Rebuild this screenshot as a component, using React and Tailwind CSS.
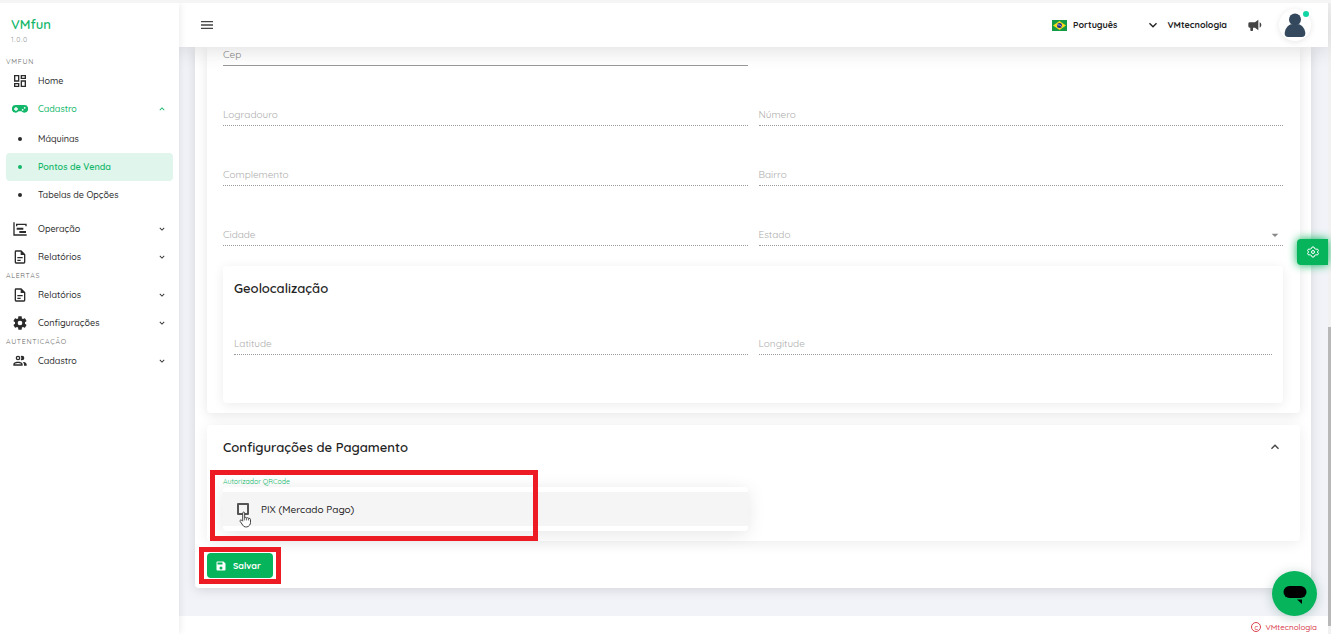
import React, { useState } from "react";

const icons = {
  dashboard: "M19,5V7H15V5H19M9,5V11H5V5H9M19,13V19H15V13H19M9,17V19H5V17H9M21,3H13V9H21V3M11,3H3V13H11V3M21,11H13V21H21V11M11,15H3V21H11V15Z",
  controller: "M5.5,6H18.5A5.5,5.5 0 0,1 18.5,17.5C16.6,17.5 15.2,16.7 14.2,15.5H9.8C8.8,16.7 7.4,17.5 5.5,17.5A5.5,5.5 0 0,1 5.5,6M5,9V11H3V13H5V15H7V13H9V11H7V9H5M19,9A1.3,1.3 0 1,0 19,11.6A1.3,1.3 0 1,0 19,9M16,12A1.3,1.3 0 1,0 16,14.6A1.3,1.3 0 1,0 16,12Z",
  timeline: "M2,2H4V20H22V22H2V2M7,10H17V13H7V10M11,15H21V18H11V15M6,4H22V8H20V6H8V8H6V4Z",
  file: "M6,2A2,2 0 0,0 4,4V20A2,2 0 0,0 6,22H18A2,2 0 0,0 20,20V8L14,2H6M6,4H13V9H18V20H6V4M8,12V14H16V12H8M8,16V18H13V16H8Z",
  cog: "M12,15.5A3.5,3.5 0 0,1 8.5,12A3.5,3.5 0 0,1 12,8.5A3.5,3.5 0 0,1 15.5,12A3.5,3.5 0 0,1 12,15.5M19.43,12.97C19.47,12.65 19.5,12.33 19.5,12C19.5,11.67 19.47,11.34 19.43,11L21.54,9.37C21.73,9.22 21.78,8.95 21.66,8.73L19.66,5.27C19.54,5.05 19.27,4.96 19.05,5.05L16.56,6.05C16.04,5.66 15.5,5.32 14.87,5.07L14.5,2.42C14.46,2.18 14.25,2 14,2H10C9.75,2 9.54,2.18 9.5,2.42L9.13,5.07C8.5,5.32 7.96,5.66 7.44,6.05L4.95,5.05C4.73,4.96 4.46,5.05 4.34,5.27L2.34,8.73C2.21,8.95 2.27,9.22 2.46,9.37L4.57,11C4.53,11.34 4.5,11.67 4.5,12C4.5,12.33 4.53,12.65 4.57,12.97L2.46,14.63C2.27,14.78 2.21,15.05 2.34,15.27L4.34,18.73C4.46,18.95 4.73,19.03 4.95,18.95L7.44,17.94C7.96,18.34 8.5,18.68 9.13,18.93L9.5,21.58C9.54,21.82 9.75,22 10,22H14C14.25,22 14.46,21.82 14.5,21.58L14.87,18.93C15.5,18.67 16.04,18.34 16.56,17.94L19.05,18.95C19.27,19.03 19.54,18.95 19.66,18.73L21.66,15.27C21.78,15.05 21.73,14.78 21.54,14.63L19.43,12.97Z",
  users: "M13.07 10.41A5 5 0 0 0 13.07 4.59A3.39 3.39 0 0 1 15 4A3.5 3.5 0 0 1 15 11A3.39 3.39 0 0 1 13.07 10.41M5.5 7.5A3.5 3.5 0 1 1 9 11A3.5 3.5 0 0 1 5.5 7.5M7.5 7.5A1.5 1.5 0 1 0 9 6A1.5 1.5 0 0 0 7.5 7.5M16 17V19H2V17S2 13 9 13 16 17 16 17M14 17C13.86 16.22 12.67 15 9 15S4.07 16.31 4 17M15.95 13A5.32 5.32 0 0 1 18 17V19H22V17S22 13.37 15.94 13Z",
  down: "M7.41,8.58L12,13.17L16.59,8.58L18,10L12,16L6,10L7.41,8.58Z",
  up: "M7.41,15.41L12,10.83L16.59,15.41L18,14L12,8L6,14L7.41,15.41Z",
  menu: "M3,6H21V8H3V6M3,11H21V13H3V11M3,16H21V18H3V16Z",
  bullhorn: "M12,8H4A2,2 0 0,0 2,10V14A2,2 0 0,0 4,16H5V20A1,1 0 0,0 6,21H8A1,1 0 0,0 9,20V16H12L17,20V4L12,8M21.5,12C21.5,13.71 20.54,15.26 19,16V8C20.53,8.75 21.5,10.3 21.5,12Z",
  save: "M15,9H5V5H15M12,19A3,3 0 0,1 9,16A3,3 0 0,1 12,13A3,3 0 0,1 15,16A3,3 0 0,1 12,19M17,3H5C3.89,3 3,3.9 3,5V19A2,2 0 0,0 5,21H19A2,2 0 0,0 21,19V7L17,3Z",
  caret: "M7,10L12,15L17,10H7Z",
};

function Icon({ name, className }) {
  return (
    <svg viewBox="0 0 24 24" fill="currentColor" fillRule="evenodd" aria-hidden="true" className={`shrink-0 ${className}`}>
      <path d={icons[name]} />
    </svg>
  );
}

function NavItem({ icon, label, open, arrow = true }) {
  return (
    <a href="#" className={`flex h-7 items-center pl-3 pr-3 font-medium ${open ? "text-[#12b76a]" : "text-[#2b2b2b]"}`}>
      <Icon name={icon} className="mr-2.5 size-4" />
      <span className="flex-1">{label}</span>
      {arrow && <Icon name={open ? "up" : "down"} className="size-2.5" />}
    </a>
  );
}

function SubItem({ label, active }) {
  return (
    <a href="#" className={`mx-1.5 flex h-7 items-center rounded pl-3 ${active ? "bg-[#e0f5eb] font-semibold text-[#12b76a]" : "font-medium text-[#2b2b2b]"}`}>
      <span className="mr-4 size-1 rounded-full bg-current" />
      {label}
    </a>
  );
}

function NavHeading({ children }) {
  return <h2 className="pl-1.5 text-[7px] leading-[10px] tracking-widest text-[#666] uppercase">{children}</h2>;
}

function Field({ id, label, disabled = true }) {
  return (
    <div className="grid">
      <input
        id={id}
        disabled={disabled}
        className={`col-start-1 row-start-1 h-[19px] w-full border-b bg-transparent outline-none ${disabled ? "border-dotted border-[#9a9a9a]" : "border-solid border-[#999]"}`}
      />
      <label htmlFor={id} className={`col-start-1 row-start-1 leading-4 ${disabled ? "text-[#adadad]" : "text-[#888]"}`}>{label}</label>
    </div>
  );
}

function StateSelect() {
  return (
    <div className="grid">
      <select id="estado" disabled className="col-start-1 row-start-1 h-[19px] w-full appearance-none border-b border-dotted border-[#9a9a9a] bg-transparent" />
      <label htmlFor="estado" className="col-start-1 row-start-1 flex items-start justify-between leading-4 text-[#adadad]">
        Estado
        <Icon name="caret" className="size-4 text-[#888]" />
      </label>
    </div>
  );
}

function Sidebar() {
  return (
    <aside className="z-20 w-[179px] shrink-0 bg-white text-[9px] shadow-[0_0_8px_rgba(0,0,0,0.1)]">
      <div className="px-[11px] pt-3 pb-2.5">
        <div className="text-[13px] leading-[18px] font-semibold text-[#12b76a]">VMfun</div>
        <div className="text-[7px] leading-[14px] tracking-widest text-[#999]">1.0.0</div>
      </div>
      <nav>
        <NavHeading>VMfun</NavHeading>
        <NavItem icon="dashboard" label="Home" arrow={false} />
        <NavItem icon="controller" label="Cadastro" open />
        <div className="pt-0.5 pb-1.5">
          <SubItem label="Máquinas" />
          <SubItem label="Pontos de Venda" active />
          <SubItem label="Tabelas de Opções" />
        </div>
        <NavItem icon="timeline" label="Operação" />
        <NavItem icon="file" label="Relatórios" />
        <NavHeading>Alertas</NavHeading>
        <NavItem icon="file" label="Relatórios" />
        <NavItem icon="cog" label="Configurações" />
        <NavHeading>Autenticação</NavHeading>
        <NavItem icon="users" label="Cadastro" />
      </nav>
    </aside>
  );
}

function Flag() {
  return (
    <svg viewBox="0 0 30 22" className="h-[11px] w-[15px]" aria-hidden="true">
      <rect width="30" height="22" fill="#169b45" />
      <path d="M15 2L28 11L15 20L2 11Z" fill="#f8dc1c" />
      <circle cx="15" cy="11" r="5" fill="#27348b" />
      <path d="M10.5 9.5Q16 9 19.5 13" fill="none" stroke="#fff" strokeWidth="1.2" />
    </svg>
  );
}

function Header() {
  return (
    <header className="z-10 flex h-11 shrink-0 items-center bg-white pr-[17px] pl-5 text-[9px] font-bold text-[#222] shadow-[0_4px_20px_rgba(0,0,0,0.12)]">
      <button type="button" aria-label="Menu"><Icon name="menu" className="size-4 text-[#444]" /></button>
      <button type="button" className="ml-auto flex items-center gap-1.5"><Flag />Português</button>
      <button type="button" className="ml-7 flex items-center gap-1.5"><Icon name="down" className="size-4" />VMtecnologia</button>
      <button type="button" aria-label="Avisos" className="ml-5"><Icon name="bullhorn" className="size-4 text-[#444]" /></button>
      <button type="button" aria-label="Conta" className="relative ml-4 flex size-8 items-end justify-center rounded-full bg-white shadow-[0_1px_6px_rgba(0,0,0,0.1)]">
        <svg viewBox="0 0 24 28" fill="#34495e" className="mb-1 h-6 w-[22px]">
          <circle cx="12" cy="7.5" r="7" />
          <path d="M7 13H17C21 15 24 19 24 24Q24 28 20 28H4Q0 28 0 24C0 19 3 15 7 13Z" />
        </svg>
        <span className="absolute top-0.5 right-0.5 size-1.5 rounded-full bg-[#11d5a4]" />
      </button>
    </header>
  );
}

function HandCursor() {
  return (
    <svg viewBox="0 0 14 18" className="h-[17px] w-[13px]" aria-hidden="true">
      <path d="M4 10.5V2.2Q4 1 5 1T6.1 2.2V7.2Q7.2 6.2 8.2 7.3Q9.3 6.5 10.3 7.7Q12.2 7.3 12.4 9V12Q12.4 14 11.5 15Q10 17.2 8 17H7Q5 17 4 15L1.2 11Q.8 9.8 1.8 9.5T4 11" fill="#fff" stroke="#333" strokeWidth="1" />
      <path d="M6.1 7V10M8.2 7.5V10M10.3 8V10" stroke="#333" strokeWidth=".8" />
    </svg>
  );
}

function PaymentPanel() {
  const [open, setOpen] = useState(true);
  const [pix, setPix] = useState(false);

  return (
    <section className="mt-3 rounded bg-white pt-3 pr-[17px] pb-2.5 pl-4 shadow-[0_2px_14px_rgba(0,0,0,0.08)]">
      <button type="button" onClick={() => setOpen(!open)} className="flex w-full items-center justify-between text-[13px] leading-5 font-semibold text-[#222]">
        Configurações de Pagamento
        <Icon name={open ? "up" : "down"} className="size-4 text-[#444]" />
      </button>
      {open && (
        <div className="relative mt-5 grid grid-cols-2 gap-x-[11px]">
          <div>
            <div className="text-[7px] leading-[10px] text-[#12b76a]">Autorizador QRCode</div>
            <div className="rounded bg-white py-[5px] shadow-[0_3px_18px_rgba(0,0,0,0.1)]">
              <label className="relative flex h-[34px] items-center gap-3 bg-[#f5f5f5] pl-3.5 text-[10px] font-medium text-[#222]">
                <input type="checkbox" checked={pix} onChange={(e) => setPix(e.target.checked)} className="size-3 appearance-none rounded-[1px] border-2 border-[#555] checked:bg-[#12b76a]" />
                PIX (Mercado Pago)
                <span className="absolute top-[19px] left-4"><HandCursor /></span>
              </label>
            </div>
          </div>
          <div className="pointer-events-none absolute -top-[7px] -left-[13px] h-[71px] w-[328px] border-[5px] border-[#ed1c24]" />
        </div>
      )}
    </section>
  );
}

export default function App() {
  return (
    <div className="relative flex h-screen overflow-hidden border-t-[3px] border-[#f5f5f5] bg-white font-['Quicksand','Lato',sans-serif] text-[10px] text-[#333]">
      <Sidebar />
      <div className="flex min-w-0 flex-1 flex-col bg-[#f1f3f8]">
        <Header />
        <main className="flex-1 pr-[17px] pl-4">
          <form onSubmit={(e) => e.preventDefault()} className="rounded-b bg-white pr-[11px] pb-2.5 pl-3 shadow-[0_2px_12px_rgba(0,0,0,0.12)]">
            <section className="rounded-b bg-white pr-[17px] pb-2.5 pl-4 shadow-[0_2px_12px_rgba(0,0,0,0.1)]">
              <div className="grid grid-cols-2 gap-x-[11px] gap-y-[41px]">
                <Field id="cep" label="Cep" disabled={false} />
                <span />
                <Field id="logradouro" label="Logradouro" />
                <Field id="numero" label="Número" />
                <Field id="complemento" label="Complemento" />
                <Field id="bairro" label="Bairro" />
                <Field id="cidade" label="Cidade" />
                <StateSelect />
              </div>
              <div className="mt-5 rounded bg-white px-[11px] pt-3 pb-12 shadow-[0_2px_12px_rgba(0,0,0,0.08)]">
                <h3 className="text-[13px] leading-5 font-semibold text-[#222]">Geolocalização</h3>
                <div className="mt-[38px] grid grid-cols-2 gap-x-[11px]">
                  <Field id="latitude" label="Latitude" />
                  <Field id="longitude" label="Longitude" />
                </div>
              </div>
            </section>
            <PaymentPanel />
            <div className="relative mt-3 w-fit">
              <button type="submit" className="flex h-[25px] items-center gap-1.5 rounded bg-[#05b45b] pr-3 pl-2 text-[9px] font-bold text-white">
                <Icon name="save" className="size-3" />
                Salvar
              </button>
              <div className="pointer-events-none absolute -inset-x-2 -inset-y-1.5 border-[5px] border-[#ed1c24]" />
            </div>
          </form>
        </main>
        <footer className="flex h-[18px] items-center justify-end gap-1 bg-white pr-[11px] pt-1 text-[8px] font-medium text-[#d9404c]">
          <span className="flex size-2.5 items-center justify-center rounded-full border border-current text-[7px] leading-none">c</span>
          <a href="#">VMtecnologia</a>
        </footer>
      </div>
      <div className="flex w-[3px] shrink-0 flex-col justify-end bg-[#f1f1f1] pb-2">
        <div className="h-[48%] bg-[#b8b8b8]" />
      </div>

      <button type="button" aria-label="Preferências" className="absolute top-[236px] right-[3px] z-20 flex h-[26px] w-[31px] items-center justify-center rounded-l bg-[#05b45b] text-white shadow-[0_0_10px_#05b45b]">
        <svg viewBox="0 0 24 24" fill="none" stroke="currentColor" strokeWidth="2" className="size-3">
          <path d="M10 2H14L15 5L18 6.5L21 6L23 9.5L20.5 12L23 14.5L21 18L18 17.5L15 19L14 22H10L9 19L6 17.5L3 18L1 14.5L3.5 12L1 9.5L3 6L6 6.5L9 5Z" />
          <circle cx="12" cy="12" r="3" />
        </svg>
      </button>
      <button type="button" aria-label="Chat" className="absolute right-3.5 bottom-[18px] z-20 flex size-[45px] items-center justify-center rounded-full bg-[#05b45b] shadow-[0_2px_12px_rgba(5,80,60,0.25)]">
        <svg viewBox="0 0 24 20" className="h-5 w-6">
          <rect x="0.5" y="2" width="23" height="12" rx="6" />
          <path d="M14 15.5H19V20Z" />
        </svg>
      </button>
    </div>
  );
}
